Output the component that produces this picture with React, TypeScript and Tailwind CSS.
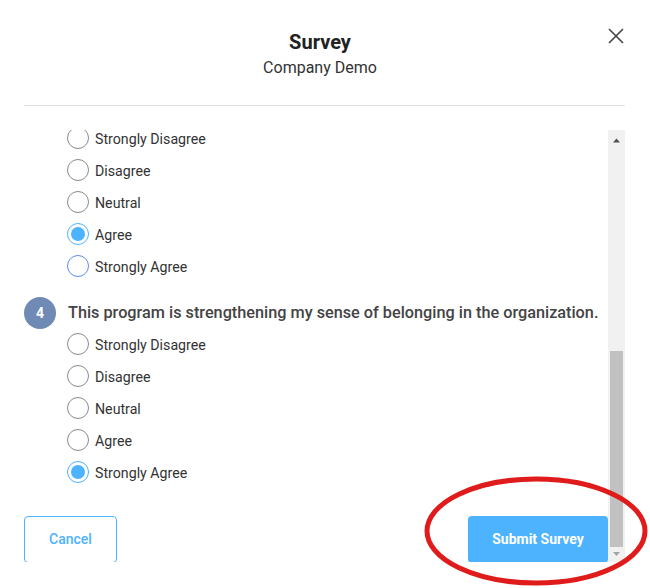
import React from "react";

const options = ["Strongly Disagree", "Disagree", "Neutral", "Agree", "Strongly Agree"];

function Radio({ label, state }: { label: string; state?: "checked" | "focus" }) {
  const ring =
    state === "checked"
      ? "border-[#4db3ff]"
      : state === "focus"
      ? "border-[#5b8cf0]"
      : "border-[#8a8a8a]";
  return (
    <div className="h-8 flex items-center">
      <span className={`w-[22px] h-[22px] rounded-full border ${ring} flex items-center justify-center bg-white`}>
        {state === "checked" && <span className="w-[14px] h-[14px] rounded-full bg-[#4db3ff]" />}
      </span>
      <span className="ml-[6px] mt-[1px] text-[14.2px] leading-[22px] text-[#333]">{label}</span>
    </div>
  );
}

export default function App() {
  return (
    <div className="relative w-[650px] h-[588px] bg-white overflow-hidden font-['Roboto',sans-serif]">
      {/* header */}
      <div className="relative h-[105px] flex flex-col items-center pt-[30px] pr-[10px]">
        <h1 className="text-[20px] leading-6 font-bold text-[#222]">Survey</h1>
        <p className="mt-[4px] text-[16px] leading-5 text-[#333]">Company Demo</p>
        <button className="absolute right-[26px] top-[28px] text-[#444]">
          <svg width="16" height="16" viewBox="0 0 16 16" fill="none" stroke="currentColor" strokeWidth="1.6">
            <path d="M1 1L15 15M15 1L1 15" />
          </svg>
        </button>
      </div>
      <div className="ml-6 mr-[25px] border-t border-[#e2e2e2]" />

      {/* scroll area */}
      <div className="mt-[24px] ml-6 mr-[25px] h-[432px] flex">
        <div className="flex-1 overflow-hidden">
          <div className="-mt-[8px] pl-[43px]">
            {options.map((o) => (
              <Radio key={o} label={o} state={o === "Agree" ? "checked" : o === "Strongly Agree" ? "focus" : undefined} />
            ))}
          </div>
          <div className="mt-[15px] h-8 flex items-center">
            <span className="w-8 h-8 rounded-full bg-[#6f8ab5] text-white text-[14px] font-bold flex items-center justify-center">
              4
            </span>
            <span className="ml-3 text-[16.25px] font-medium text-[#444]">
              This program is strengthening my sense of belonging in the organization.
            </span>
          </div>
          <div className="-mt-[1px] pl-[43px]">
            {options.map((o) => (
              <Radio key={o} label={o} state={o === "Strongly Agree" ? "checked" : undefined} />
            ))}
          </div>
          <div className="mt-[28px] flex justify-between">
            <button className="w-[93px] h-[47px] rounded border border-[#4db3ff] text-[#4db3ff] text-[14px] font-medium">
              Cancel
            </button>
            <button className="w-[140px] h-[47px] rounded bg-[#4db3ff] text-white text-[14px] font-bold">
              Submit Survey
            </button>
          </div>
        </div>
        {/* scrollbar */}
        <div className="w-[17px] bg-[#f1f1f1] flex flex-col items-center">
          <svg width="9" height="16" viewBox="0 0 9 16" className="mt-[3px]">
            <path d="M1 9.5L4.5 5.5L8 9.5Z" fill="#505050" />
          </svg>
          <div className="mt-[202px] w-[13px] h-[196px] bg-[#c1c1c1]" />
          <svg width="9" height="14" viewBox="0 0 9 14">
            <path d="M1 5L4.5 9L8 5Z" fill="#a3a3a3" />
          </svg>
        </div>
      </div>

      {/* annotation */}
      <svg className="absolute left-[422px] top-[474px] pointer-events-none" width="228" height="114" viewBox="0 0 228 114">
        <ellipse cx="114" cy="57" rx="109" ry="52" fill="none" stroke="#e01b1b" strokeWidth="5" />
      </svg>
    </div>
  );
}
